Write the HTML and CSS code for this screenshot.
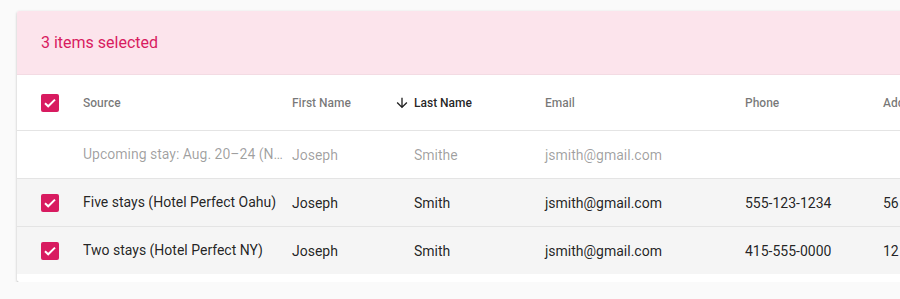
FILE: index.html
```html
<!DOCTYPE html>
<html>
<head>
<meta charset="utf-8">
<link rel="stylesheet" href="styles.css">
</head>
<body>
<div class="card">
  <div class="selbar">3 items selected</div>
  <div class="table">
    <div class="row head">
      <div class="cell chk"><span class="box"><svg viewBox="0 0 18 18" width="18" height="18"><path d="M4 9.2l3.2 3.1L14 5.6" fill="none" stroke="#fff" stroke-width="2"/></svg></span></div>
      <div class="cell">Source</div>
      <div class="cell">First Name</div>
      <div class="cell sorted"><svg class="arrow" viewBox="0 0 24 24" width="16" height="16"><path d="M20 12l-1.41-1.41L13 16.17V4h-2v12.17l-5.58-5.59L4 12l8 8 8-8z" fill="currentColor"/></svg>Last Name</div>
      <div class="cell">Email</div>
      <div class="cell">Phone</div>
      <div class="cell">Address</div>
    </div>
    <div class="row dim">
      <div class="cell chk"></div>
      <div class="cell ell">Upcoming stay: Aug. 20–24 (Never confirmed)</div>
      <div class="cell">Joseph</div>
      <div class="cell lastcol">Smithe</div>
      <div class="cell">jsmith@gmail.com</div>
      <div class="cell"></div>
      <div class="cell"></div>
    </div>
    <div class="row sel">
      <div class="cell chk"><span class="box"><svg viewBox="0 0 18 18" width="18" height="18"><path d="M4 9.2l3.2 3.1L14 5.6" fill="none" stroke="#fff" stroke-width="2"/></svg></span></div>
      <div class="cell ell">Five stays (Hotel Perfect Oahu)</div>
      <div class="cell">Joseph</div>
      <div class="cell lastcol">Smith</div>
      <div class="cell">jsmith@gmail.com</div>
      <div class="cell">555-123-1234</div>
      <div class="cell">56 Kalakaua Ave</div>
    </div>
    <div class="row sel last">
      <div class="cell chk"><span class="box"><svg viewBox="0 0 18 18" width="18" height="18"><path d="M4 9.2l3.2 3.1L14 5.6" fill="none" stroke="#fff" stroke-width="2"/></svg></span></div>
      <div class="cell ell">Two stays (Hotel Perfect NY)</div>
      <div class="cell">Joseph</div>
      <div class="cell lastcol">Smith</div>
      <div class="cell">jsmith@gmail.com</div>
      <div class="cell">415-555-0000</div>
      <div class="cell">12 Broadway</div>
    </div>
  </div>
</div>
</body>
</html>
```
FILE: styles.css
```css
html, body {
  margin: 0;
  padding: 0;
  background: #fafafa;
  overflow: hidden;
  font-family: Roboto, "Liberation Sans", sans-serif;
}
body {
  padding: 11px 0 0 17px;
}
.card {
  width: 1000px;
  background: #fff;
  border-radius: 2px;
  box-shadow: 0 1px 3px rgba(0,0,0,.2), 0 1px 1px rgba(0,0,0,.14), 0 2px 1px -1px rgba(0,0,0,.12);
  padding-bottom: 8px;
  overflow: hidden;
}
.selbar {
  height: 64px;
  background: #fce4ec;
  color: #d81b60;
  font-size: 16px;
  display: flex;
  align-items: center;
  padding-left: 24px;
  border-bottom: 1px solid #f3dbe3;
  box-sizing: border-box;
}
.row {
  display: grid;
  grid-template-columns: 66px 209px 102px 151px 200px 138px 134px;
  height: 48px;
  border-bottom: 1px solid #e4e4e4;
  box-sizing: border-box;
  font-size: 14px;
  color: rgba(0,0,0,.87);
}
.row.head {
  height: 56px;
  font-size: 12px;
  font-weight: 500;
  color: rgba(0,0,0,.54);
}
.row.last { border-bottom: none; height: 47px; }
.row.sel { background: #f5f5f5; }
.row.dim { color: rgba(0,0,0,.38); }
.cell {
  display: flex;
  align-items: center;
  white-space: nowrap;
  min-width: 0;
}
.cell.ell {
  display: block;
  line-height: 47px;
  overflow: hidden;
  text-overflow: ellipsis;
  padding-right: 8px;
}
.cell.chk { padding-left: 24px; }
.cell.lastcol { padding-left: 20px; }
.cell.sorted { color: rgba(0,0,0,.87); }
.arrow { margin-right: 4px; }
.box {
  width: 18px;
  height: 18px;
  background: #d81b60;
  border-radius: 2px;
  display: block;
}
.box svg { display: block; }
```
